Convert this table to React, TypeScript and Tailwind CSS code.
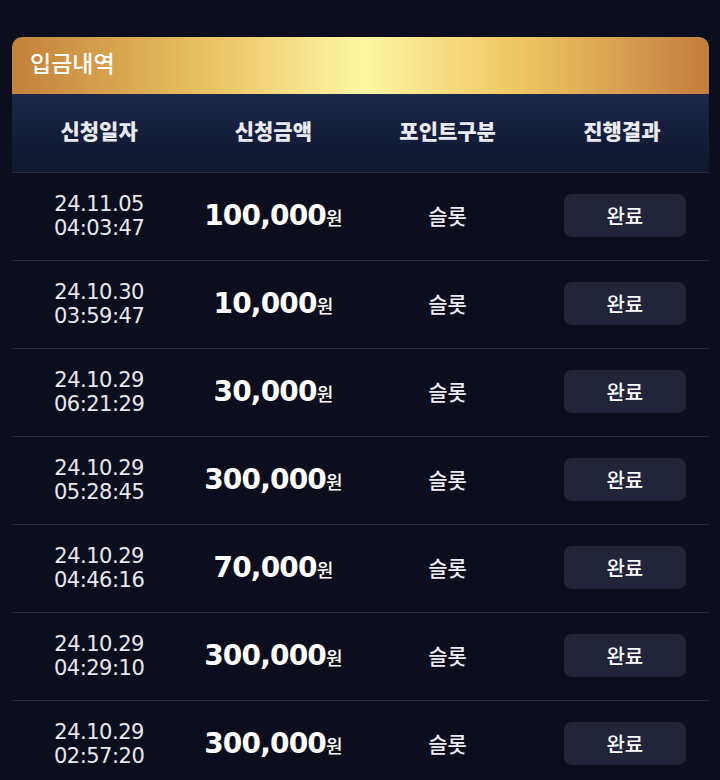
import React from "react";

type Row = { date: string; time: string; amount: string };

const rows: Row[] = [
  { date: "24.11.05", time: "04:03:47", amount: "100,000" },
  { date: "24.10.30", time: "03:59:47", amount: "10,000" },
  { date: "24.10.29", time: "06:21:29", amount: "30,000" },
  { date: "24.10.29", time: "05:28:45", amount: "300,000" },
  { date: "24.10.29", time: "04:46:16", amount: "70,000" },
  { date: "24.10.29", time: "04:29:10", amount: "300,000" },
  { date: "24.10.29", time: "02:57:20", amount: "300,000" },
];

const kr = "font-['Noto_Sans_CJK_KR',sans-serif]";
const num = "font-['DejaVu_Sans','Noto_Sans_CJK_KR',sans-serif]";

const App: React.FC = () => {
  return (
    <div className={`min-h-[780px] bg-[#0c0e1e] pt-[37px] px-[12px] ${kr}`}>
      <div className="w-[697px] overflow-hidden">
        <div className="h-[57px] rounded-t-[10px] bg-[linear-gradient(90deg,#c4813a_0%,#e9c262_28%,#fff6a2_50%,#efc864_72%,#c47d3d_100%)] flex items-center px-[18px] pb-[6px]">
          <h1 className="text-[23px] font-medium text-white leading-none">
            입금내역
          </h1>
        </div>

        <div className="h-[78px] grid grid-cols-4 items-center pb-[4px] bg-[linear-gradient(180deg,#1c2849_0%,#131c38_60%,#0f1730_100%)] text-[21px] font-extrabold text-[#e8eaf0]">
          <div className="text-center">신청일자</div>
          <div className="text-center">신청금액</div>
          <div className="text-center">포인트구분</div>
          <div className="text-center">진행결과</div>
        </div>

        {rows.map((r, i) => (
          <div
            key={i}
            className="h-[88px] grid grid-cols-4 items-center border-t border-[#262b42]"
          >
            <div
              className={`text-center text-[21px] leading-[24px] text-[#e8e9ee] tracking-[-0.5px] pb-[2px] ${num}`}
            >
              <div>{r.date}</div>
              <div>{r.time}</div>
            </div>
            <div className="text-center text-white pb-[2px]">
              <span
                className={`text-[28px] font-bold tracking-[-0.8px] ${num}`}
              >
                {r.amount}
              </span>
              <span className="text-[18px] font-medium">원</span>
            </div>
            <div className="text-center text-[21px] font-medium text-[#eceef4] pb-[2px]">
              슬롯
            </div>
            <div className="flex justify-center pl-[6px] pb-[2px]">
              <div className="w-[122px] h-[43px] rounded-[8px] bg-[#22253a] flex items-center justify-center text-[20px] font-medium text-white">
                완료
              </div>
            </div>
          </div>
        ))}
      </div>
    </div>
  );
};

export default App;
